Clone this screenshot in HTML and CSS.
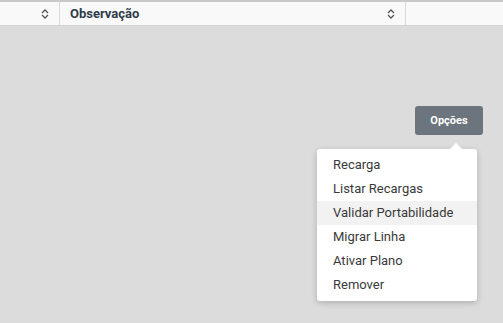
FILE: index.html
```html
<!DOCTYPE html>
<html lang="pt-BR">
<head>
    <meta charset="UTF-8">
    <meta name="viewport" content="width=device-width, initial-scale=1.0">
    <title>Linhas</title>
    <link rel="stylesheet" href="styles.css">
</head>
<body>

    <!-- Cabecalho da tabela -->
    <div class="table-head">
        <div class="th th-first">
            <svg class="sort" width="8" height="10" viewBox="0 0 8 10"><path d="M1 4 L4 1 L7 4 M1 6 L4 9 L7 6" fill="none" stroke="#555" stroke-width="1.3"/></svg>
        </div>
        <div class="th th-obs">
            <span>Observação</span>
            <svg class="sort" width="8" height="10" viewBox="0 0 8 10"><path d="M1 4 L4 1 L7 4 M1 6 L4 9 L7 6" fill="none" stroke="#555" stroke-width="1.3"/></svg>
        </div>
        <div class="th th-last"></div>
    </div>

    <div class="actions">
        <div class="dropdown">
            <button class="btn-options">Opções</button>
            <ul class="dropdown-menu">
                <li>Recarga</li>
                <li>Listar Recargas</li>
                <li class="active">Validar Portabilidade</li>
                <li>Migrar Linha</li>
                <li>Ativar Plano</li>
                <li>Remover</li>
            </ul>
        </div>
    </div>

</body>
</html>
```

FILE: styles.css
```css
* {
    margin: 0;
    padding: 0;
    box-sizing: border-box;
}

body {
    font-family: 'Roboto', 'Liberation Sans', sans-serif;
    background-color: #dcdcdc;
    color: #333;
    height: 323px;
    overflow: hidden;
    border-top: 2px solid #c9c9c9;
}

/* Table header */
.table-head {
    display: flex;
    height: 24px;
    background-color: #f9f9f9;
    border-bottom: 1px solid #d4d4d4;
}

.th {
    display: flex;
    align-items: center;
    border-right: 1px solid #dadada;
}

.th-first {
    width: 60px;
    justify-content: flex-end;
    padding-right: 10px;
}

.th-obs {
    width: 346px;
    justify-content: space-between;
    padding: 0 10px 0 10px;
    font-size: 13px;
    font-weight: bold;
    color: #2f3b4a;
}

.th-last {
    flex: 1;
    border-right: none;
}

.sort {
    display: block;
}

/* Options dropdown */
.actions {
    display: flex;
    justify-content: flex-end;
    padding: 80px 20px 0 0;
}

.dropdown {
    position: relative;
}

.btn-options {
    width: 68px;
    height: 29px;
    background-color: #6c757d;
    color: #fff;
    border: none;
    border-radius: 3px;
    font-family: 'Roboto', sans-serif;
    font-size: 11px;
    font-weight: bold;
}

.dropdown-menu {
    position: absolute;
    top: 43px;
    right: 6px;
    width: 160px;
    padding: 4px 0;
    list-style: none;
    background-color: #fff;
    border-radius: 3px;
    box-shadow: 0 2px 6px rgba(0, 0, 0, 0.2);
}

.dropdown-menu::before {
    content: '';
    position: absolute;
    top: -6px;
    right: 15px;
    border-left: 6px solid transparent;
    border-right: 6px solid transparent;
    border-bottom: 6px solid #fff;
}

.dropdown-menu li {
    height: 24px;
    line-height: 24px;
    padding-left: 16px;
    font-size: 13px;
    color: #3a3a3a;
}

.dropdown-menu li.active {
    background-color: #f2f2f2;
}
```
